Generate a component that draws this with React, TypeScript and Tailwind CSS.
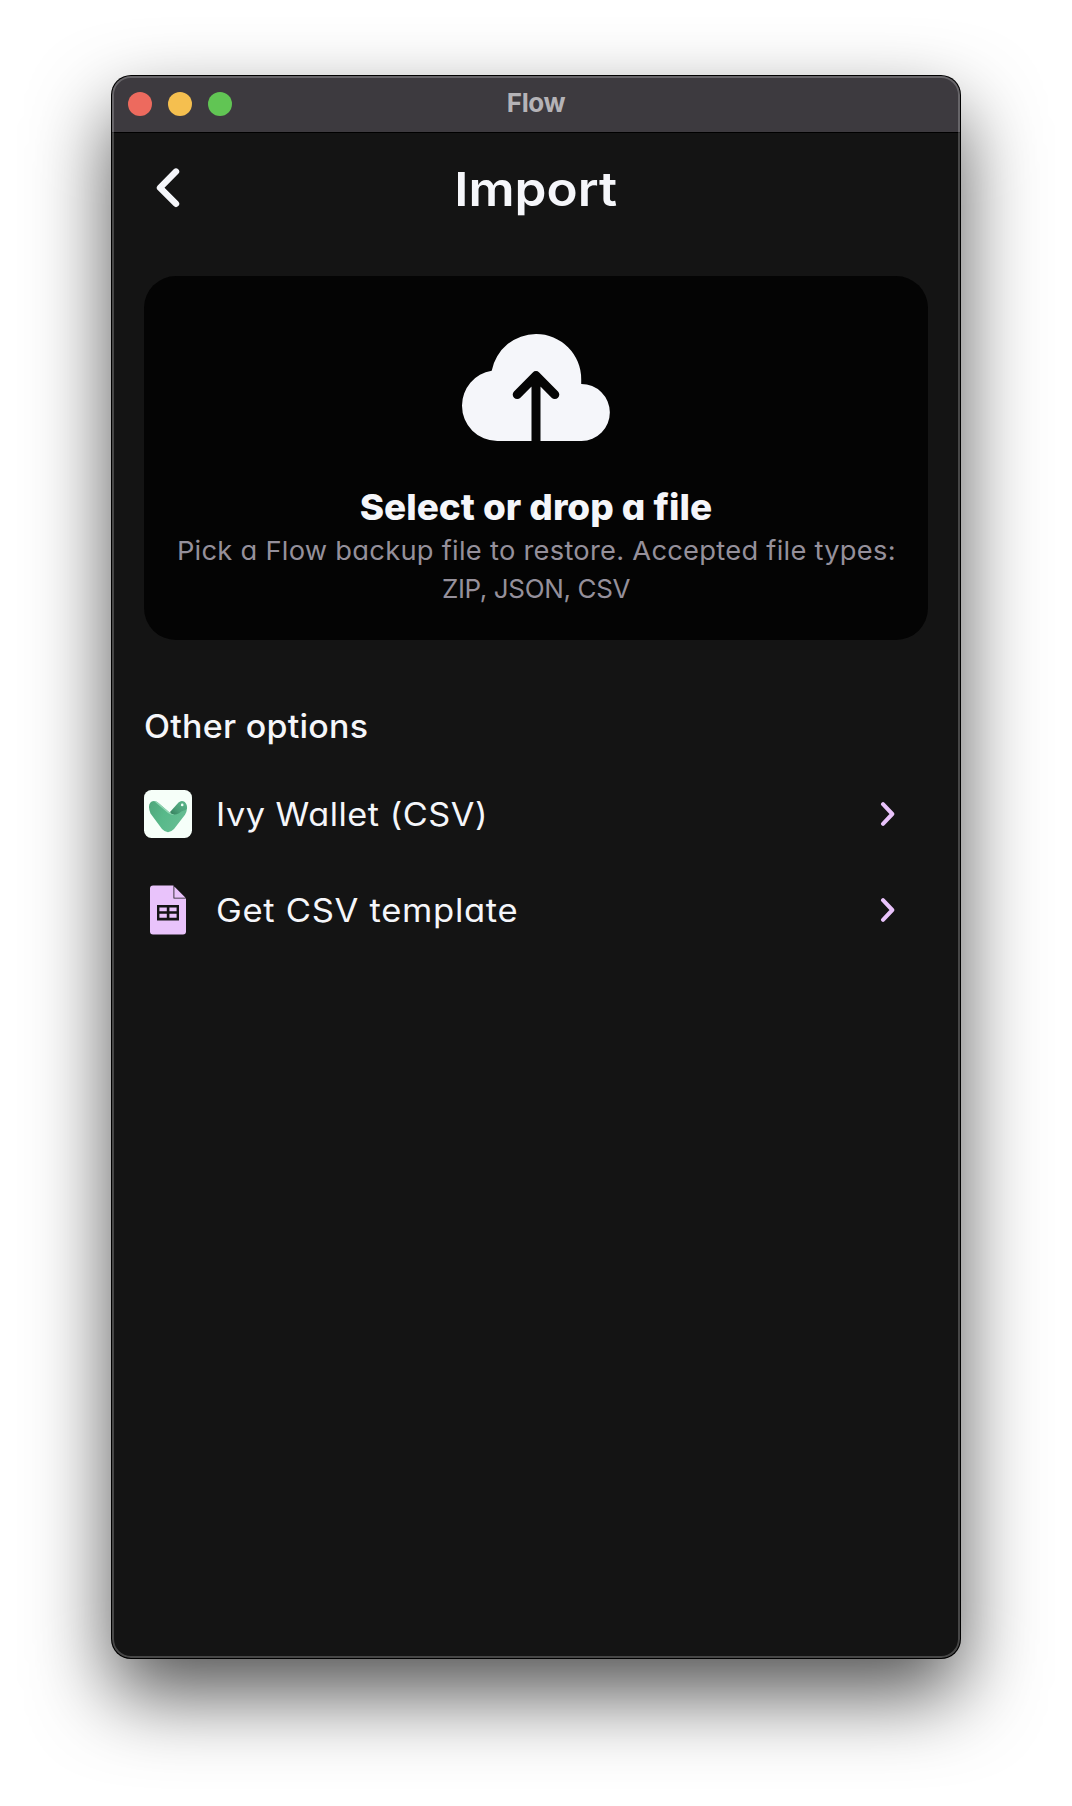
import type { ReactNode } from "react";

function CloudUpload() {
  return (
    <svg className="h-[107px] w-[148px] shrink-0" viewBox="0 0 148 107" fill="none">
      <path
        d="M35.3 107A35.3 35.3 0 0 1 0 71.7A35.3 35.3 0 0 1 29.7 36.7A45.2 45.2 0 0 1 74.2 0A45 45 0 0 1 119.2 45V50A28.5 28.5 0 0 1 119.5 107Z"
        fill="#f5f6fa"
      />
      <path d="M55.2 60.6L74 41.6L92.8 60.6M74 44V108" stroke="#050505" strokeWidth="9" strokeLinecap="round" strokeLinejoin="round" />
    </svg>
  );
}

function IvyLogo() {
  return (
    <svg className="size-12" viewBox="0 0 48 48">
      <defs>
        <linearGradient id="ivyBody" x1="0" y1="0" x2="1" y2="0.4">
          <stop offset="0" stopColor="#4fa67b" />
          <stop offset="0.5" stopColor="#58b98a" />
          <stop offset="1" stopColor="#65bd92" />
        </linearGradient>
        <linearGradient id="ivyWing" x1="1" y1="0" x2="0" y2="1">
          <stop offset="0" stopColor="#5bb78b" />
          <stop offset="0.55" stopColor="#4b9f78" />
          <stop offset="1" stopColor="#2e7554" />
        </linearGradient>
      </defs>
      <rect width="48" height="48" rx="7.5" fill="#f6fff9" />
      <path d="M26 22L34.5 12.4Q37.5 9.6 40.8 12Q43.5 14.5 43 19L40 24L29 27Z" fill="url(#ivyWing)" />
      <path d="M8.5 11.2Q11.5 10.2 14.5 13L25 22Q29 26.3 35 23.2Q37 21.5 40 20.6L42.8 19.5Q42.8 22 41 24.7L30 39Q24 45.4 18 39L6.5 23.5Q3.6 16 6.3 12.8Q7.2 11.6 8.5 11.2Z" fill="url(#ivyBody)" />
      <path d="M10 11Q12.4 11 14.5 13L25 22Q27 24.3 30 24.5Q27 25.2 24 23Z" fill="#93d6b4" />
      <circle cx="38.2" cy="14.9" r="1.3" fill="#effff6" />
    </svg>
  );
}

function SheetIcon() {
  return (
    <svg className="size-[50px] shrink-0" viewBox="0 0 50 50">
      <path d="M10 .5H30.5V13.5H43V46.5Q43 49.5 40 49.5H10Q7 49.5 7 46.5V3.5Q7 .5 10 .5Z" fill="#e9c3fb" />
      <path d="M31.3 1.6L42.6 12.7H31.3Z" fill="#e9c3fb" />
      <path d="M14 20H36V35.5H14ZM16.4 22.4V26.3H23.8V22.4ZM26.4 22.4V26.3H33.6V22.4ZM16.4 28.8V32.8H23.8V28.8ZM26.4 28.8V32.8H33.6V28.8Z" fill="#151515" fillRule="evenodd" />
    </svg>
  );
}

function OptionRow({ icon, children }: { icon: ReactNode; children: ReactNode }) {
  return (
    <div className="flex h-24 items-center pr-8">
      <div className="flex w-12 items-center justify-center">{icon}</div>
      <div className="ml-6 flex-1 pt-0.5 text-[32px] leading-10">{children}</div>
      <svg className="h-6 w-4" viewBox="0 0 16 24" fill="none">
        <path d="M3 2.2L12.3 12L3 21.8" stroke="#e9c3fb" strokeWidth="4" strokeLinecap="round" strokeLinejoin="round" />
      </svg>
    </div>
  );
}

export default function App() {
  return (
    <div className="h-[1806px] w-[1072px] overflow-hidden bg-white pl-[112px] pt-[76px] font-['Inter',sans-serif] text-[#f5f6fa]">
      <div className="relative flex h-[1582px] w-[848px] flex-col overflow-clip rounded-[19px] bg-[#141414] shadow-[0_0_0_1px_#000,0_36px_80px_rgba(0,0,0,0.68)] [font-feature-settings:'cv11']">
        <div className="relative flex h-[57px] items-center justify-center border-b border-black bg-[#3d3a3f]">
          <div className="absolute left-4 top-4 flex gap-4">
            <span className="size-6 rounded-full bg-[#ed6a5e]" />
            <span className="size-6 rounded-full bg-[#f5bf4f]" />
            <span className="size-6 rounded-full bg-[#61c554]" />
          </div>
          <span className="-mt-[3px] text-[26px] font-bold leading-8 tracking-[-0.4px] text-[#b5b3b7]">Flow</span>
        </div>

        <header className="relative flex h-[111px] items-center justify-center">
          <svg className="absolute left-11 top-[35px] h-10 w-6" viewBox="0 0 24 40" fill="none">
            <path d="M20 3.6L4 19.7L20 35.8" stroke="#f5f6fa" strokeWidth="6.4" strokeLinecap="round" strokeLinejoin="round" />
          </svg>
          <h1 className="scale-x-[1.09] pt-px text-[47px] font-semibold leading-[60px]">Import</h1>
        </header>

        <main className="flex flex-col px-8 pt-8">
          <section className="flex h-[364px] flex-col items-center rounded-[32px] bg-[#040404] pt-[58px]">
            <CloudUpload />
            <h2 className="mt-[42px] scale-x-[1.025] text-[36px] font-extrabold leading-[49px]">Select or drop a file</h2>
            <p className="text-center text-[26px] leading-[38px] text-[#95909b]">
              <span className="block scale-x-[1.05] whitespace-nowrap tracking-[0.25px]">Pick a Flow backup file to restore. Accepted file types:</span>
              <span className="block tracking-[-0.35px]">ZIP, JSON, CSV</span>
            </p>
          </section>

          <h3 className="mt-[67px] origin-left scale-x-[1.06] text-[32px] font-medium leading-10 tracking-[0.25px]">Other options</h3>
          <div className="mt-[19px]">
            <OptionRow icon={<IvyLogo />}>
              <span className="inline-block origin-left scale-x-[1.07] tracking-[0.5px]">Ivy Wallet (CSV)</span>
            </OptionRow>
            <OptionRow icon={<SheetIcon />}>
              <span className="inline-block origin-left scale-x-[1.08] tracking-[0.65px]">Get CSV template</span>
            </OptionRow>
          </div>
        </main>
        <div className="pointer-events-none absolute inset-0 rounded-[19px] border-2 border-white/[0.22]" />
      </div>
    </div>
  );
}
